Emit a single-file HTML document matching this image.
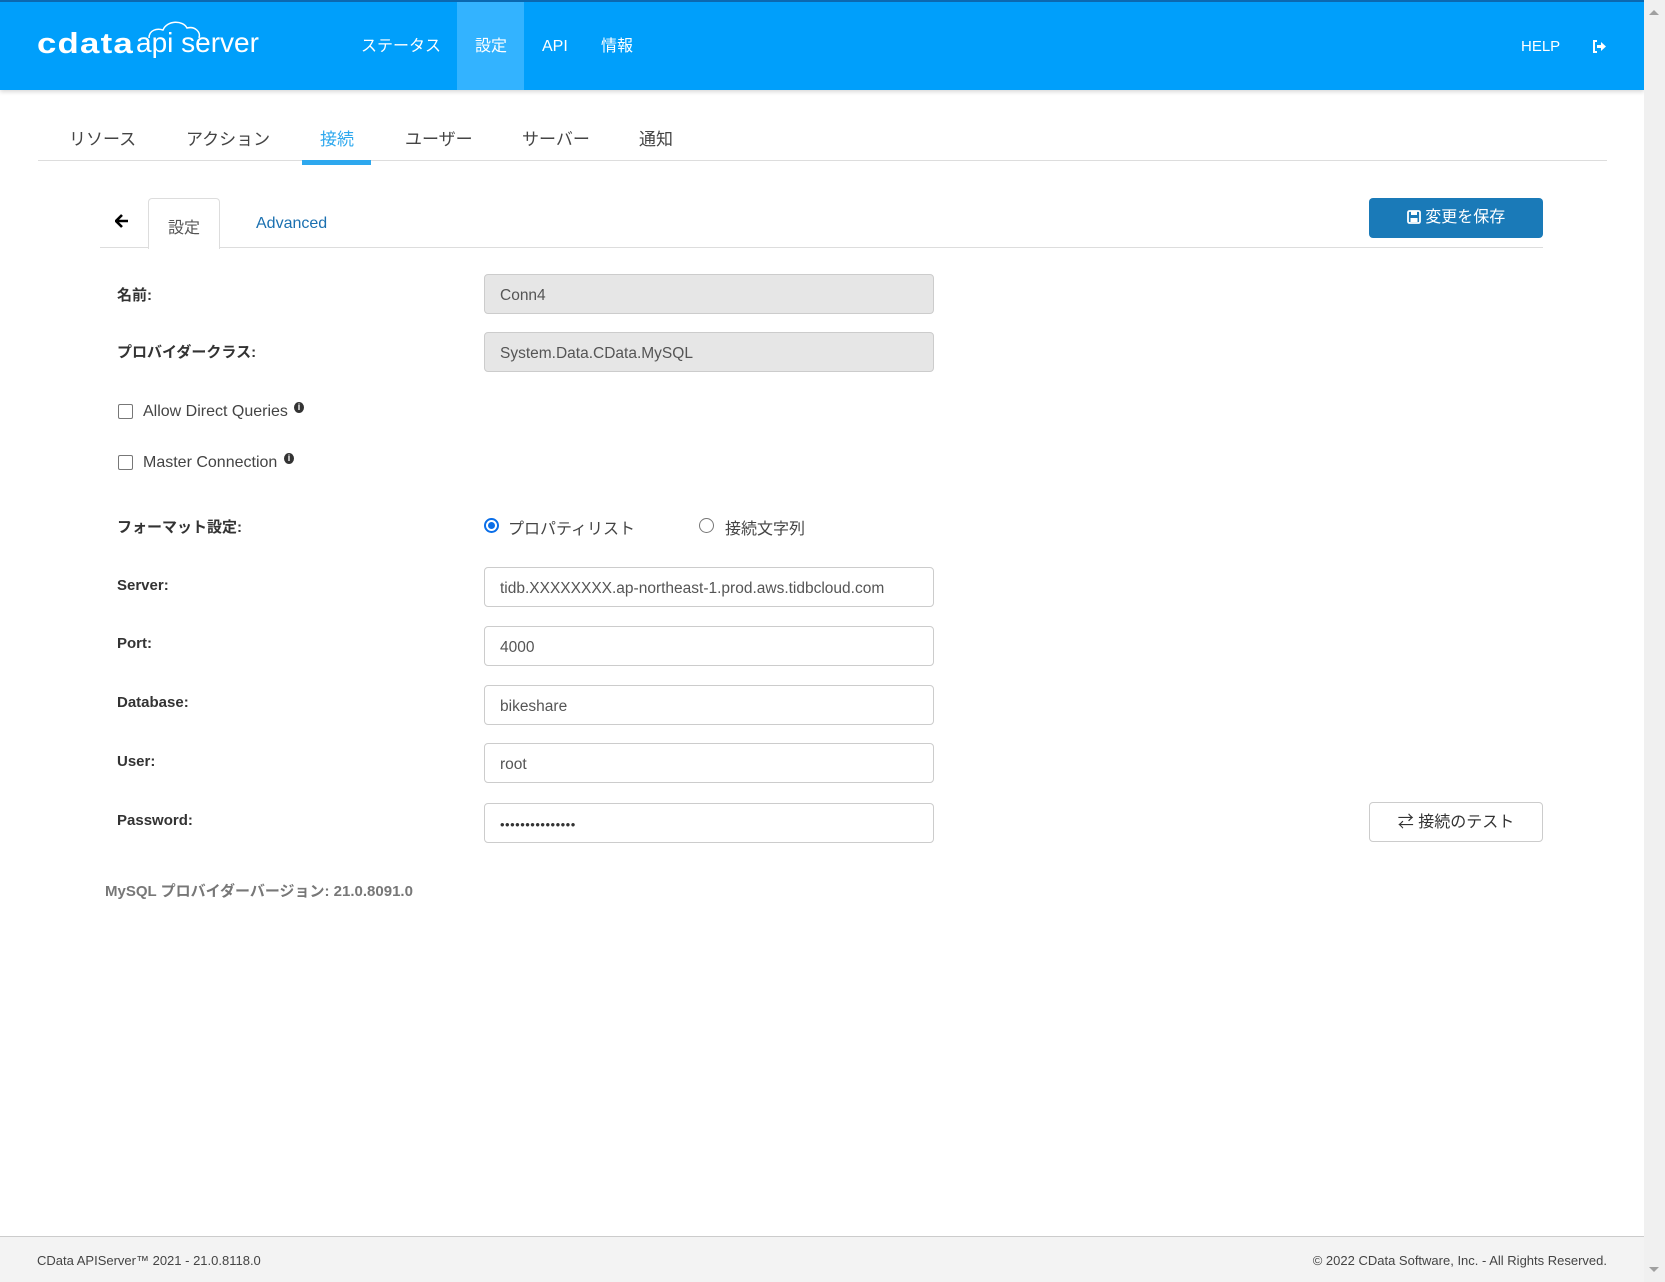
<!DOCTYPE html>
<html><head><meta charset="utf-8"><style>
*{box-sizing:border-box;margin:0;padding:0}
body{width:1665px;height:1282px;overflow:hidden;background:#fff;font-family:"Liberation Sans","Noto Sans CJK JP",sans-serif;color:#333;position:relative}
.abs{position:absolute}
.hdr{left:0;top:0;width:1644px;height:90px;background:#009ffb;border-top:2px solid #0b68b0;box-shadow:0 2px 4px rgba(0,0,0,.15)}
.nav{color:#fff;font-size:16px;top:36px;height:22px;line-height:22px}
.sb{left:1644px;top:0;width:21px;height:1282px;background:#f0f0f0}
.tab{font-size:17px;top:125px;color:#444}
.lbl{left:117px;font-size:15px;font-weight:bold;color:#333}
.inp{left:484px;width:450px;height:40px;border:1px solid #ccc;border-radius:4px;padding-left:15px;font-size:15.5px;line-height:42px;color:#555;background:#fff}
.ro{background:#e6e6e6}
.cb{width:15px;height:15px;border:1px solid #777;border-radius:2px;left:118px}
.info{width:10px;height:11px;border-radius:50%;background:#333;color:#fff;font-size:9px;line-height:11px;text-align:center;font-weight:bold}
</style></head><body>
<div class="abs hdr"></div>
<div class="abs" style="left:457px;top:2px;width:67px;height:88px;background:#33b3ff"></div>
<div class="abs" style="left:37px;top:28px;color:#fff;font-size:29px;font-weight:bold;letter-spacing:1px;transform:scaleX(1.2);transform-origin:left">cdata</div>
<svg class="abs" style="left:145px;top:18px" width="60" height="22"><path d="M4 20 C4 12 12 10 18 12 C22 2 38 2 42 10 C50 8 56 14 54 20" fill="none" stroke="#fff" stroke-width="1.5"/></svg>
<div class="abs" style="left:136px;top:27px;color:#fff;font-size:28px">api server</div>
<div class="abs nav" style="left:361px">ステータス</div>
<div class="abs nav" style="left:475px">設定</div>
<div class="abs nav" style="left:542px">API</div>
<div class="abs nav" style="left:601px">情報</div>
<div class="abs nav" style="left:1521px;font-size:15px">HELP</div>
<svg class="abs" style="left:1592px;top:40px" width="15" height="13"><path d="M5 1H2v11h3" fill="none" stroke="#fff" stroke-width="2"/><path d="M5 5h4V2l5 4.5-5 4.5V8H5z" fill="#fff"/></svg>
<div class="abs sb"></div>
<svg class="abs" style="left:1648px;top:8px" width="12" height="8"><path d="M1 7L6 2l5 5z" fill="#a0a0a0"/></svg>
<svg class="abs" style="left:1648px;top:1266px" width="12" height="8"><path d="M1 1L6 6l5-5z" fill="#a0a0a0"/></svg>

<div class="abs tab" style="left:69px">リソース</div>
<div class="abs tab" style="left:186px">アクション</div>
<div class="abs tab" style="left:320px;color:#2ea8ee">接続</div>
<div class="abs tab" style="left:405px">ユーザー</div>
<div class="abs tab" style="left:522px">サーバー</div>
<div class="abs tab" style="left:639px">通知</div>
<div class="abs" style="left:38px;top:160px;width:1569px;height:1px;background:#ddd"></div>
<div class="abs" style="left:302px;top:160px;width:69px;height:5px;background:#2ea8ee"></div>

<div class="abs" style="left:100px;top:247px;width:1443px;height:1px;background:#ddd"></div>
<svg class="abs" style="left:115px;top:214px" width="14" height="14"><path d="M7 1L1 7l6 6M1 7h12" fill="none" stroke="#000" stroke-width="2.6"/></svg>
<div class="abs" style="left:148px;top:198px;width:72px;height:51px;border:1px solid #ddd;border-bottom:none;border-radius:4px 4px 0 0;background:#fff"></div>
<div class="abs" style="left:168px;top:214px;font-size:16px;color:#555">設定</div>
<div class="abs" style="left:256px;top:215px;font-size:16px;color:#1a70b0">Advanced</div>
<div class="abs" style="left:1369px;top:198px;width:174px;height:40px;background:#1a7ab8;border-radius:4px;color:#fff;font-size:16px;text-align:center;line-height:40px">
<svg width="14" height="14" style="vertical-align:-2px"><rect x="1" y="1" width="12" height="12" rx="1.5" fill="none" stroke="#fff" stroke-width="1.8"/><rect x="4" y="1" width="6" height="4" fill="#fff"/><rect x="3.5" y="8" width="7" height="4" fill="#fff"/></svg> 変更を保存</div>

<div class="abs lbl" style="top:284px">名前:</div>
<div class="abs inp ro" style="top:274px">Conn4</div>
<div class="abs lbl" style="top:341px">プロバイダークラス:</div>
<div class="abs inp ro" style="top:332px">System.Data.CData.MySQL</div>

<div class="abs cb" style="top:404px"></div>
<div class="abs" style="left:143px;top:403px;font-size:16px;color:#444">Allow Direct Queries</div>
<div class="abs info" style="left:294px;top:402px">i</div>
<div class="abs cb" style="top:455px"></div>
<div class="abs" style="left:143px;top:454px;font-size:16px;color:#444">Master Connection</div>
<div class="abs info" style="left:284px;top:453px">i</div>

<div class="abs lbl" style="top:516px">フォーマット設定:</div>
<div class="abs" style="left:484px;top:518px;width:15px;height:15px;border-radius:50%;background:#0a6ee8;border:1px solid #0a6ee8"><div style="margin:3px;width:7px;height:7px;border-radius:50%;background:#0a6ee8;box-shadow:0 0 0 2px #fff"></div></div>
<div class="abs" style="left:508px;top:515px;font-size:16px;color:#444">プロパティリスト</div>
<div class="abs" style="left:699px;top:518px;width:15px;height:15px;border-radius:50%;border:1px solid #777"></div>
<div class="abs" style="left:725px;top:515px;font-size:16px;color:#444">接続文字列</div>

<div class="abs lbl" style="top:577px">Server:</div>
<div class="abs inp" style="top:567px">tidb.XXXXXXXX.ap-northeast-1.prod.aws.tidbcloud.com</div>
<div class="abs lbl" style="top:635px">Port:</div>
<div class="abs inp" style="top:626px">4000</div>
<div class="abs lbl" style="top:694px">Database:</div>
<div class="abs inp" style="top:685px">bikeshare</div>
<div class="abs lbl" style="top:753px">User:</div>
<div class="abs inp" style="top:743px">root</div>
<div class="abs lbl" style="top:812px">Password:</div>
<div class="abs inp" style="top:803px;font-size:13px;letter-spacing:0.5px;color:#333">•••••••••••••••</div>
<div class="abs" style="left:1369px;top:802px;width:174px;height:40px;border:1px solid #ccc;border-radius:4px;font-size:16px;text-align:center;line-height:40px;color:#333">⇄ 接続のテスト</div>

<div class="abs" style="left:105px;top:880px;font-size:15px;font-weight:bold;color:#777">MySQL プロバイダーバージョン: 21.0.8091.0</div>

<div class="abs" style="left:0;top:1236px;width:1644px;height:46px;background:#f3f3f3;border-top:1px solid #ccc"></div>
<div class="abs" style="left:37px;top:1253px;font-size:13px;color:#444">CData APIServer™ 2021 - 21.0.8118.0</div>
<div class="abs" style="left:1300px;width:307px;text-align:right;top:1253px;font-size:13px;color:#444">© 2022 CData Software, Inc. - All Rights Reserved.</div>
</body></html>
